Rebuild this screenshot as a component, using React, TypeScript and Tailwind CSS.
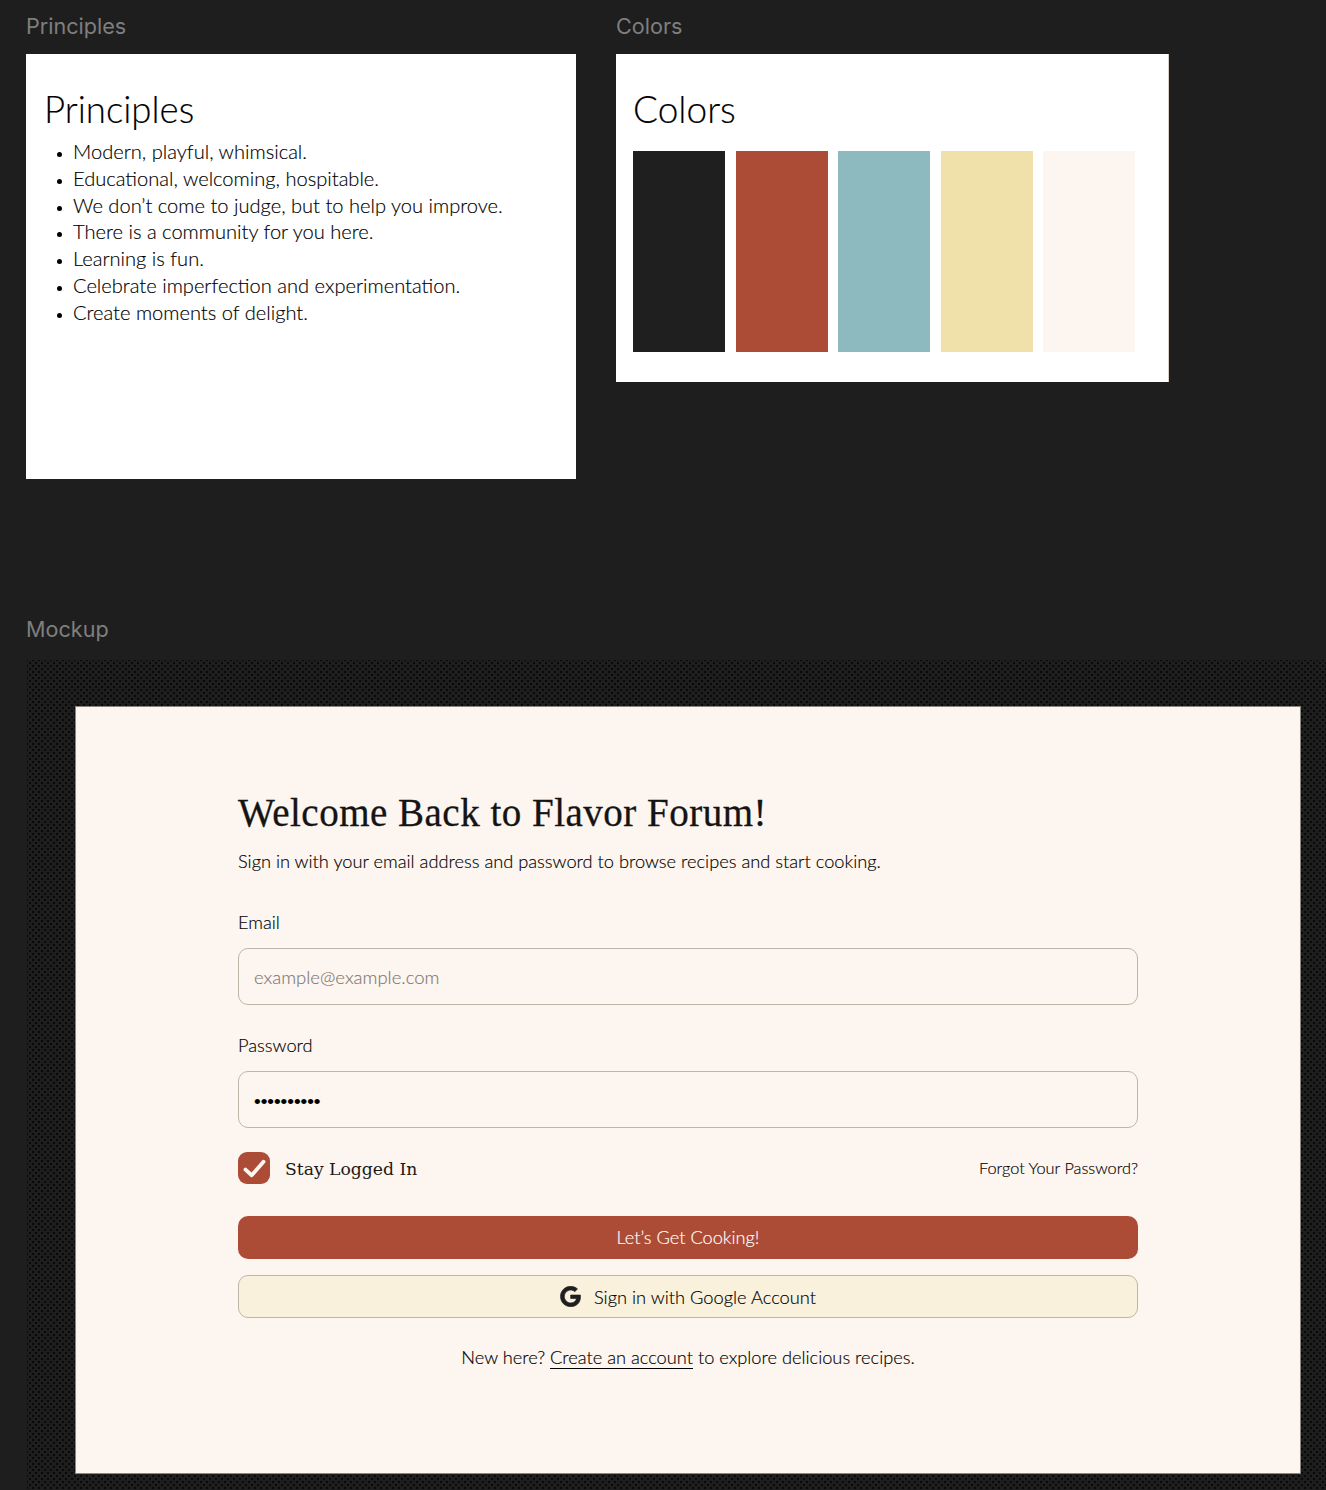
import React from "react";
import { FaGoogle } from "react-icons/fa";

const principles = [
  "Modern, playful, whimsical.",
  "Educational, welcoming, hospitable.",
  "We don’t come to judge, but to help you improve.",
  "There is a community for you here.",
  "Learning is fun.",
  "Celebrate imperfection and experimentation.",
  "Create moments of delight.",
];

const swatches = [
  { name: "charcoal", className: "bg-[#1f1f1f]" },
  { name: "rust", className: "bg-[#ad4c36]" },
  { name: "teal", className: "bg-[#8dbabf]" },
  { name: "butter", className: "bg-[#f0e0a9]" },
  { name: "cream", className: "bg-[#fdf5ef]" },
];

export default function App() {
  return (
    <div className="h-[1490px] overflow-hidden bg-[#1e1e1e] font-['Lato',sans-serif] font-light text-black">
      {/* Top frames */}
      <div className="flex gap-10 pl-[26px] pt-[13px]">
        <div className="w-[550px]">
          <p className="h-[27px] font-['Inter',sans-serif] text-[21.6px] leading-[27px] font-normal text-[#7f7f7f]">Principles</p>
          <div className="mt-[14px] h-[425px] bg-white pl-[18px] pt-[33px] [-webkit-text-stroke:0.15px]">
            <h2 className="text-[36.6px] leading-[44px] font-light">Principles</h2>
            <ul className="mt-[7px] list-disc pl-[29px] text-[20.1px] leading-[26.8px] marker:text-[14px]">
              {principles.map((item) => (
                <li key={item}>{item}</li>
              ))}
            </ul>
          </div>
        </div>

        <div className="w-[553px]">
          <p className="h-[27px] font-['Inter',sans-serif] text-[21.6px] leading-[27px] font-normal text-[#7f7f7f]">Colors</p>
          <div className="mt-[14px] h-[328px] border-r border-[#d8cfc8] bg-white pl-[17px] pt-[33px] [-webkit-text-stroke:0.15px]">
            <h2 className="text-[37px] leading-[44px] font-light">Colors</h2>
            <div className="mt-5 flex gap-[10.5px]">
              {swatches.map((swatch) => (
                <div key={swatch.name} className={`h-[201px] w-[92px] ${swatch.className}`} />
              ))}
            </div>
          </div>
        </div>
      </div>

      {/* Mockup frame */}
      <div className="pl-[26px] pt-[137px]">
        <p className="h-[27px] font-['Inter',sans-serif] text-[21.6px] leading-[27px] font-normal text-[#7f7f7f]">Mockup</p>
        <div className="mt-[17px] ml-px h-[830px] bg-[radial-gradient(#080808_0.7px,transparent_1.1px),radial-gradient(#080808_0.7px,transparent_1.1px)] bg-[length:6px_6px] bg-[position:0_0,3px_3px] pl-[48px] pt-[46px]">
          <div className="h-[768px] w-[1226px] border border-[#8a8680] bg-[#fdf5ef] pl-[162px] pt-[83px] [-webkit-text-stroke:0.15px]">
            <div className="w-[900px]">
              <h1 className="pt-px font-['Liberation_Serif',serif] text-[39px] leading-[44px] tracking-[0.5px] text-[#141414] [-webkit-text-stroke:0.3px]">
                Welcome Back to Flavor Forum!
              </h1>
              <p className="mt-[14px] text-[18.24px] leading-[24px]">
                Sign in with your email address and password to browse recipes and start cooking.
              </p>

              <label className="mt-[37px] block text-[18.24px] leading-[24px]">Email</label>
              <div className="mt-[14px] flex h-[57px] items-center rounded-[10px] border border-[#bfb4a8] pl-[15px] pt-[3px] text-[18.5px] text-[#7f7a74]">
                example@example.com
              </div>

              <label className="mt-[28px] block text-[18.24px] leading-[24px]">Password</label>
              <div className="mt-[14px] flex h-[57px] items-center rounded-[10px] border border-[#bfb4a8] pl-[15px] pt-[6px] font-['Liberation_Sans',sans-serif] text-[19px]">
                ••••••••••
              </div>

              <div className="mt-6 flex h-8 items-center justify-between">
                <div className="flex items-center gap-[15px]">
                  <div className="flex h-8 w-8 items-center justify-center rounded-[9px] bg-[#ad4c36]">
                    <svg viewBox="0 0 24 24" className="h-[27px] w-[27px]" fill="none" stroke="#fdf5ef" strokeWidth="3.4" strokeLinecap="round" strokeLinejoin="round">
                      <path d="M4 13l5.5 5L20 6" />
                    </svg>
                  </div>
                  <span className="pt-[3px] font-['DejaVu_Serif',serif] text-[17.2px] font-normal text-[#1a1a1a] [-webkit-text-stroke:0px]">Stay Logged In</span>
                </div>
                <a className="text-[16.3px]">Forgot Your Password?</a>
              </div>

              <button className="mt-8 block h-[43px] w-full rounded-[10px] bg-[#ad4c36] pt-px text-[18.2px] text-white">
                Let’s Get Cooking!
              </button>
              <button className="mt-4 flex h-[43px] w-full items-center justify-center gap-[13px] rounded-[10px] border border-[#bfb4a8] bg-[#f9f1dc] pt-[3px] text-[18.3px]">
                <FaGoogle className="-mt-[3px] h-[21px] w-[21px] text-[#1f1f1f]" stroke="currentColor" strokeWidth="16" />
                Sign in with Google Account
              </button>

              <p className="mt-[27px] text-center text-[18.24px] leading-[24px]">
                New here? <a className="border-b border-black">Create an account</a> to explore delicious recipes.
              </p>
            </div>
          </div>
        </div>
      </div>
    </div>
  );
}
